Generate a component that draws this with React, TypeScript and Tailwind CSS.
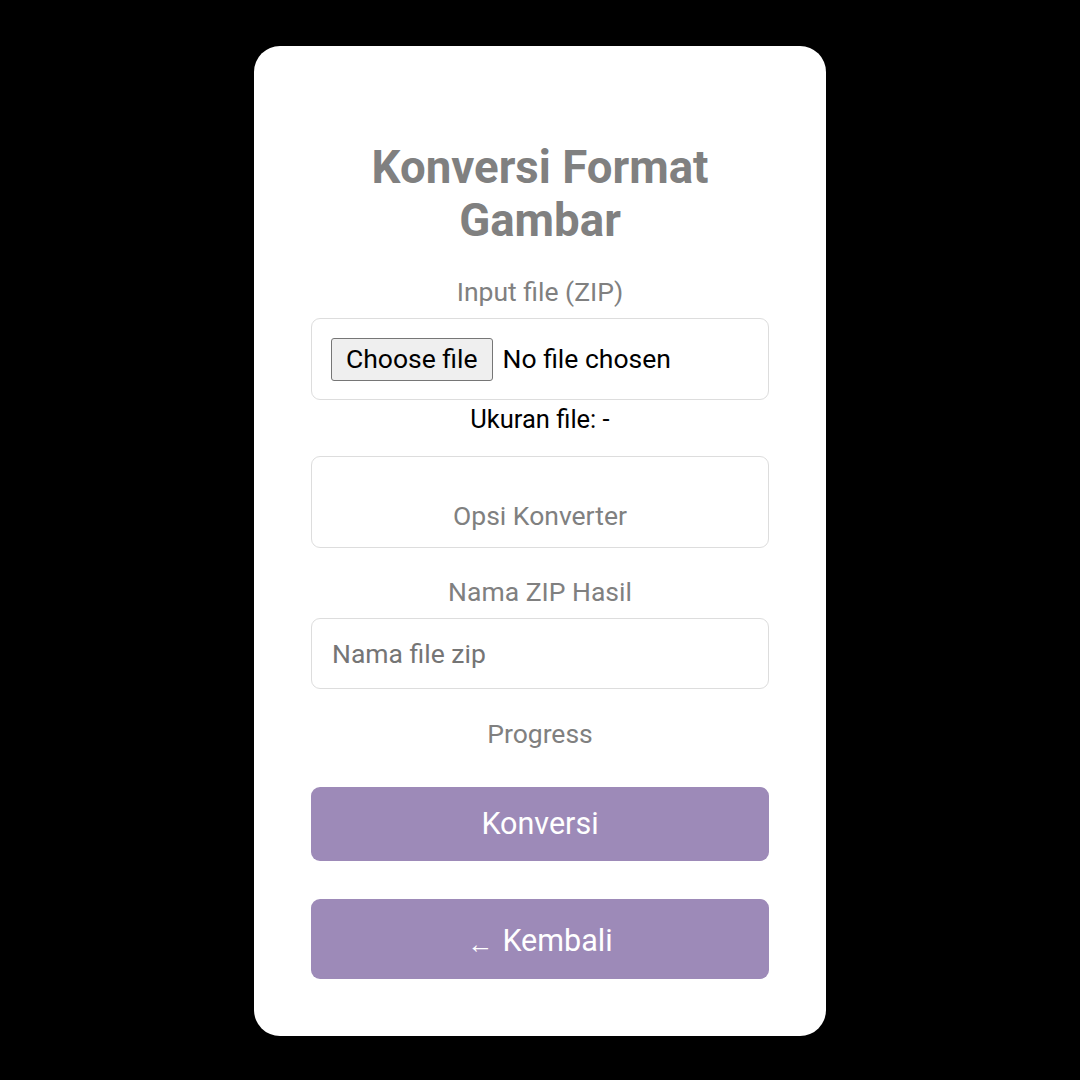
import React from "react";

export default function App() {
  return (
    <div className="w-[1080px] h-[1080px] bg-black flex justify-center pt-[46px]" style={{ fontFamily: "Roboto, 'Liberation Sans', sans-serif" }}>
      <div className="w-[572px] h-[990px] bg-white rounded-[26px] flex flex-col items-stretch px-[57px] pt-[95px]">
        <h1 className="text-[45.6px] leading-[53px] font-bold text-[#808080] text-center">
          Konversi Format
          <br />
          Gambar
        </h1>
        <div className="mt-[30px] text-[26.5px] leading-[30px] text-[#808080] text-center">Input file (ZIP)</div>
        <div className="mt-[11px] h-[82px] border border-[#dddddd] rounded-[9px] flex items-center pl-[19px]">
          <span className="h-[43px] px-[14px] flex items-center border border-[#767676] bg-[#efefef] rounded-[3px] text-[26.5px] text-black">Choose file</span>
          <span className="ml-[10px] text-[26.5px] text-black">No file chosen</span>
        </div>
        <div className="mt-[4px] text-[25.5px] leading-[30px] text-black text-center">Ukuran file: -</div>
        <div className="mt-[22px] h-[92px] border border-[#dddddd] rounded-[9px] flex items-end justify-center pb-[16px]">
          <span className="text-[26.5px] leading-[30px] text-[#808080]">Opsi Konverter</span>
        </div>
        <div className="mt-[29px] text-[26.5px] leading-[30px] text-[#808080] text-center">Nama ZIP Hasil</div>
        <input
          className="mt-[11px] h-[71px] border border-[#dddddd] rounded-[9px] px-[20px] text-[26.5px] text-black placeholder:text-[#757575] outline-none"
          placeholder="Nama file zip"
        />
        <div className="mt-[30px] text-[26.5px] leading-[30px] text-[#808080] text-center">Progress</div>
        <button className="mt-[38px] h-[74px] rounded-[9px] bg-[#9d8ab8] text-white text-[30.5px] flex items-center justify-center">
          Konversi
        </button>
        <button className="mt-[38px] h-[80px] rounded-[9px] bg-[#9d8ab8] text-white text-[30.5px] flex items-center justify-center pt-[4px]">
          <span className="text-[26px] mr-[9px] mt-[6px]">←</span>Kembali
        </button>
      </div>
    </div>
  );
}
